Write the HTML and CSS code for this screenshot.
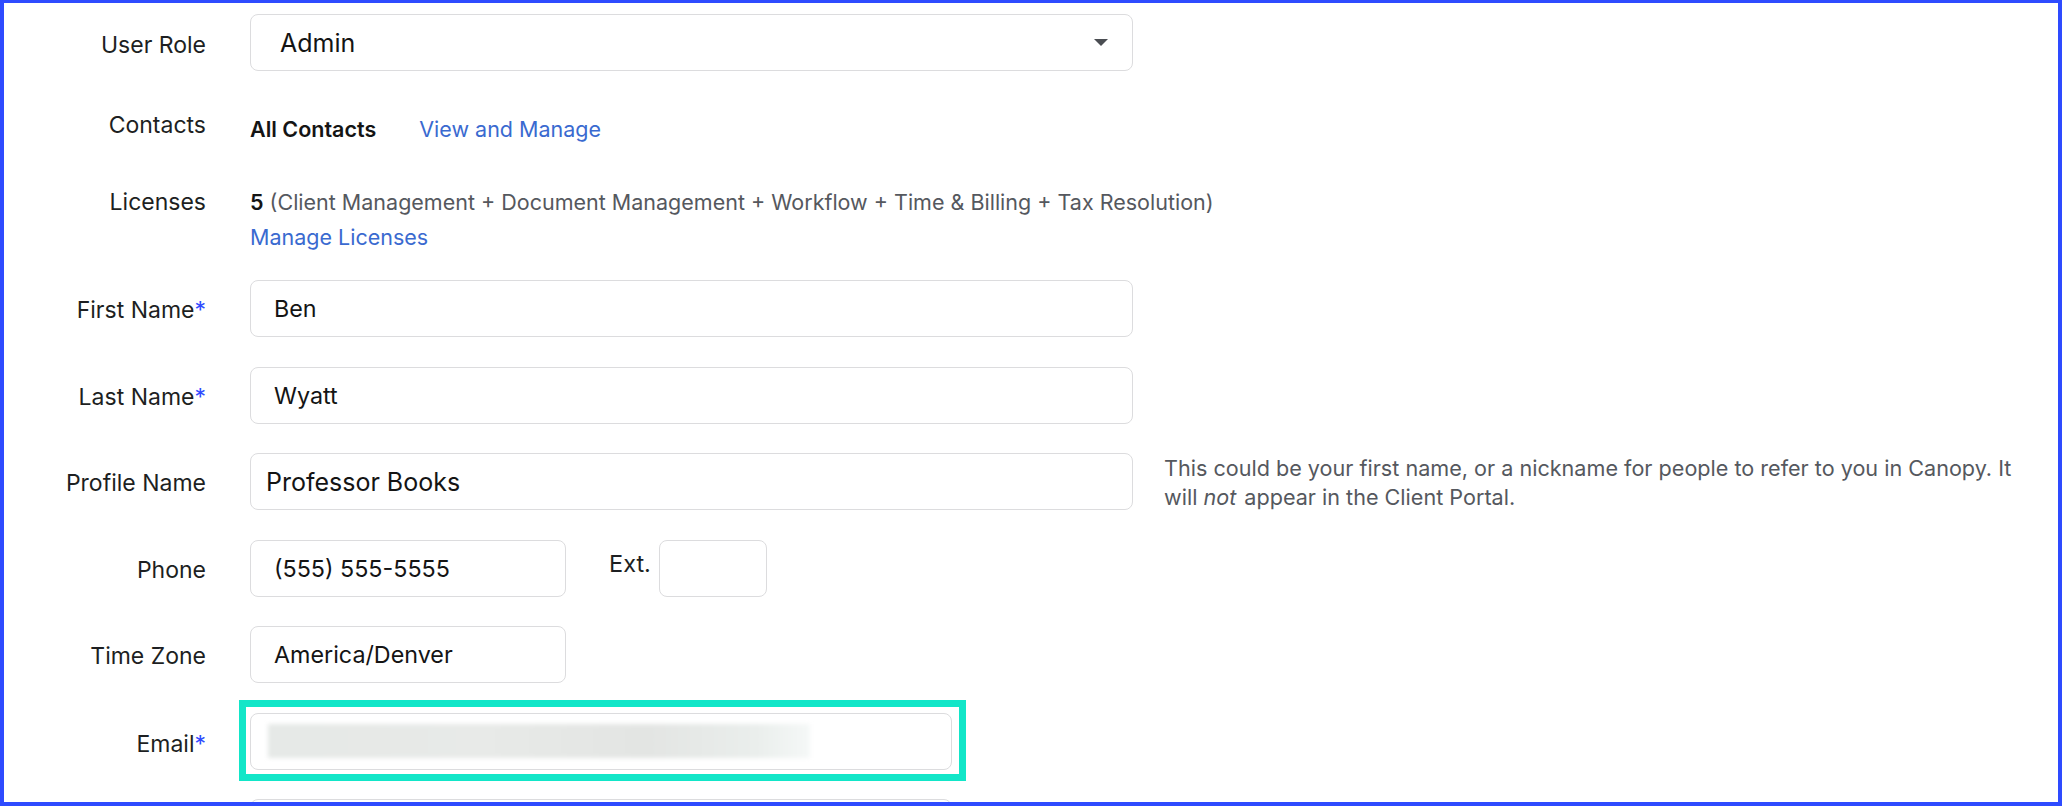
FILE: index.html
```html
<!DOCTYPE html>
<html lang="en">
<head>
  <meta charset="UTF-8">
  <meta name="viewport" content="width=device-width, initial-scale=1.0">
  <title>User Profile</title>
  <link rel="stylesheet" href="styles.css">
</head>
<body>
  <div class="frame">
    <form class="profile-form">
      <div class="row row-select">
        <label class="row-label">User Role</label>
        <div class="select">
          <span>Admin</span>
          <span class="caret"></span>
        </div>
      </div>

      <div class="row row-contacts">
        <span class="row-label">Contacts</span>
        <div class="value">
          <strong>All Contacts</strong>
          <a href="#">View and Manage</a>
        </div>
      </div>

      <div class="row row-licenses">
        <span class="row-label">Licenses</span>
        <div class="value">
          <div class="licenses-line"><strong>5</strong> (Client Management + Document Management + Workflow + Time &amp; Billing + Tax Resolution)</div>
          <a href="#" class="licenses-link">Manage Licenses</a>
        </div>
      </div>

      <div class="row row-input">
        <label class="row-label" for="firstName">First Name<span class="req">*</span></label>
        <input id="firstName" class="input input-wide" type="text" value="Ben">
      </div>

      <div class="row row-input">
        <label class="row-label" for="lastName">Last Name<span class="req">*</span></label>
        <input id="lastName" class="input input-wide" type="text" value="Wyatt">
      </div>

      <div class="row row-input">
        <label class="row-label" for="profileName">Profile Name</label>
        <div class="field-group">
          <input id="profileName" class="input input-wide input-profile" type="text" value="Professor Books">
          <p class="help">This could be your first name, or a nickname for people to refer to you in Canopy. It will <em>not</em> appear in the Client Portal.</p>
        </div>
      </div>

      <div class="row row-input">
        <label class="row-label" for="phone">Phone</label>
        <div class="field-group">
          <input id="phone" class="input input-short" type="text" value="(555) 555-5555">
          <label class="ext-label" for="ext">Ext.</label>
          <input id="ext" class="input input-ext" type="text" value="">
        </div>
      </div>

      <div class="row row-input">
        <label class="row-label" for="timeZone">Time Zone</label>
        <input id="timeZone" class="input input-short" type="text" value="America/Denver">
      </div>

      <div class="row row-input row-email">
        <label class="row-label">Email<span class="req">*</span></label>
        <div class="highlight">
          <div class="input input-email">
            <span class="blurred"></span>
          </div>
        </div>
      </div>

      <div class="row row-input">
        <span class="row-label"></span>
        <input class="input input-email" type="text" value="">
      </div>
    </form>
  </div>
</body>
</html>
```

FILE: styles.css
```css
:root {
  --frame: #2e4bff;
  --text: #1d1f22;
  --muted: #55585e;
  --link: #3a6ad0;
  --required: #2f4bff;
  --border: #dcdcde;
  --highlight: #12e6c8;
}
* { box-sizing: border-box; }
html, body {
  margin: 0;
  height: 100%;
  overflow: hidden;
  background: #ffffff;
}
body {
  font-family: Inter, "Noto Sans", sans-serif;
  color: var(--text);
}
.frame {
  height: 806px;
  border: 4px solid var(--frame);
  border-top-width: 3px;
  overflow: hidden;
}
.profile-form {
  padding-top: 11px;
}
.row {
  display: grid;
  grid-template-columns: 202px 1fr;
  column-gap: 44px;
  align-items: center;
}
.row-label {
  text-align: right;
  font-size: 23px;
  line-height: 30px;
  color: var(--text);
}
.req {
  color: var(--required);
}

/* select */
.select {
  width: 883px;
  height: 57px;
  display: flex;
  align-items: center;
  justify-content: space-between;
  padding: 0 24px 0 29px;
  border: 1px solid var(--border);
  border-radius: 8px;
  font-size: 25px;
  color: #141414;
}
.row-select .row-label {
  padding-top: 5px;
}
.caret {
  width: 0;
  height: 0;
  border-left: 7.5px solid transparent;
  border-right: 7.5px solid transparent;
  border-top: 7px solid #4a4d52;
}

/* text rows */
.row-contacts,
.row-licenses {
  align-items: start;
}
.row-contacts {
  margin-top: 39px;
}
.row-licenses {
  margin-top: 43px;
}
.value {
  font-size: 21.5px;
  line-height: 30px;
}
.row-contacts .value {
  padding-top: 4px;
}
.value strong {
  font-weight: 600;
  color: #141414;
}
.row-contacts .value a {
  margin-left: 37px;
}
a {
  color: var(--link);
  text-decoration: none;
}
.licenses-line {
  color: var(--muted);
}
.licenses-link {
  display: block;
  margin-top: 5px;
}

/* inputs */
.row-licenses + .row-input {
  margin-top: 28px;
}
.row-input + .row-input {
  margin-top: 29.5px;
}
.row-input .row-label {
  padding-top: 3px;
}
.input {
  flex: none;
  height: 57px;
  padding: 0 23px;
  border: 1px solid var(--border);
  border-radius: 8px;
  font-family: inherit;
  font-size: 23.3px;
  color: #141414;
  background: #ffffff;
  outline: none;
}
.input-wide {
  width: 883px;
}
.input-profile {
  padding-left: 15px;
  font-size: 25px;
}
.input-short {
  width: 316px;
}
.input-ext {
  width: 108px;
  margin-left: 8px;
}
.input-email {
  width: 702px;
}
.field-group {
  display: flex;
  align-items: flex-start;
  height: 57px;
}
.help {
  flex: 1;
  margin: 0 0 0 31px;
  padding: 1px 24px 0 0;
  font-size: 21.6px;
  line-height: 29px;
  color: var(--muted);
}
.help em {
  padding-right: 2px;
}
.ext-label {
  margin-left: 43px;
  padding-top: 9px;
  font-size: 23.5px;
  line-height: 30px;
}

/* highlighted email */
.row-email .row-label {
  padding-top: 6px;
}
.highlight {
  width: max-content;
  margin: -13px 0 -11px -11px;
  padding: 6px 7px 4px 4px;
  border: 7px solid var(--highlight);
}
.input-email.input {
  display: flex;
  align-items: center;
  padding-left: 17px;
}
.blurred {
  display: block;
  width: 542px;
  height: 34px;
  background: linear-gradient(90deg, #e6e9e7 0%, #e8eae8 40%, #e3e5e3 70%, #eaeeec 90%, #f5f8f7 100%);
  filter: blur(2px);
}
```
